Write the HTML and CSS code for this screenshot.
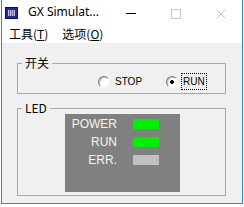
FILE: index.html
```html
<!DOCTYPE html>
<html>
<head>
<meta charset="utf-8">
<link rel="stylesheet" href="styles.css">
</head>
<body>
<div class="window">
  <div class="titlebar">
    <svg class="appicon" width="13" height="12" viewBox="0 0 13 12">
      <rect x="0" y="0" width="13" height="12" fill="#1a2aa8"/>
      <rect x="0.5" y="0.5" width="12" height="11" fill="none" stroke="#0a1060"/>
      <rect x="3" y="3" width="7" height="6" fill="#c8b8d8"/>
      <rect x="4" y="3" width="1" height="6" fill="#d04060"/>
      <rect x="6" y="3" width="1" height="6" fill="#d04060"/>
      <rect x="8" y="3" width="1" height="6" fill="#d04060"/>
    </svg>
    <span class="title">GX Simulat...</span>
    <div class="caption-btns">
      <svg class="cbtn" width="10" height="10" viewBox="0 0 10 10"><rect x="0" y="4" width="10" height="1" fill="#000"/></svg>
      <svg class="cbtn" width="10" height="10" viewBox="0 0 10 10"><rect x="0.5" y="0.5" width="9" height="9" fill="none" stroke="#c8c8c8"/></svg>
      <svg class="cbtn" width="10" height="10" viewBox="0 0 10 10"><path d="M0.5 0.5 L9.5 9.5 M9.5 0.5 L0.5 9.5" stroke="#c8c8c8" stroke-width="1"/></svg>
    </div>
  </div>
  <div class="menubar">
    <span class="menu">工具(<u>T</u>)</span>
    <span class="menu">选项(<u>O</u>)</span>
  </div>
  <div class="client">
    <fieldset class="group group-switch">
      <legend class="legend">开关</legend>
      <div class="radios">
        <label class="radio"><input type="radio" name="mode" class="rb"><span class="rtext">STOP</span></label>
        <label class="radio"><input type="radio" name="mode" class="rb" checked><span class="rtext focus">RUN</span></label>
      </div>
    </fieldset>
    <fieldset class="group group-led">
      <legend class="legend">LED</legend>
      <div class="panel">
        <span class="lname">POWER</span><span class="led on"></span>
        <span class="lname">RUN</span><span class="led on"></span>
        <span class="lname">ERR.</span><span class="led off"></span>
      </div>
    </fieldset>
  </div>
</div>
</body>
</html>
```
FILE: styles.css
```css
html, body {
  margin: 0;
  padding: 0;
  background: #ffffff;
}
.window {
  margin-left: 1px;
  width: 240px;
  border-left: 1px solid #2b87d8;
  border-right: 1px solid #2b87d8;
  border-bottom: 1px solid #2b87d8;
  background: #ffffff;
}
.titlebar {
  height: 24px;
  display: flex;
  align-items: center;
  position: relative;
}
.appicon {
  margin-left: 3px;
  margin-top: 1px;
  display: block;
}
.title {
  margin-left: 10px;
  font: 12px/14px "Noto Sans", "Liberation Sans", sans-serif;
  color: #000;
}
.caption-btns {
  display: flex;
  margin-left: 27px;
  gap: 35px;
  align-items: center;
  margin-top: 3px;
}
.cbtn {
  display: block;
}
.menubar {
  height: 19px;
  display: flex;
  align-items: center;
  gap: 14px;
  padding-left: 7px;
  font: 12px/16px "Noto Sans CJK SC", "Liberation Sans", sans-serif;
  color: #000;
}
.menu u {
  text-decoration: underline;
  text-underline-offset: 1px;
}
.client {
  height: 160px;
  background: #f0f0f0;
  box-sizing: border-box;
  padding: 14px 16px 0 15px;
  display: flex;
  flex-direction: column;
}
.group {
  margin: 0;
  padding: 0;
  border: 1px solid #a9a9a9;
  min-width: 0;
}
.legend {
  margin-left: 4px;
  padding: 0 3px;
  font: 12px/12px "Noto Sans CJK SC", "Liberation Sans", sans-serif;
  color: #000;
}
.group-switch {
  padding: 4px 0 3px 0;
}
.radios {
  display: flex;
  align-items: center;
  height: 17px;
  padding-left: 80px;
  gap: 23px;
}
.radio {
  display: flex;
  align-items: center;
  gap: 4px;
  font: 10px/13px "Liberation Sans", Arial, sans-serif;
  color: #000;
}
.rb {
  appearance: none;
  -webkit-appearance: none;
  margin: 0;
  width: 12px;
  height: 12px;
  border-radius: 50%;
  box-sizing: border-box;
  border: 1px solid;
  border-color: #7a7a7a #f4f4f4 #f4f4f4 #7a7a7a;
  background: #ffffff;
  box-shadow: inset 1px 1px 0 #c0c0c0;
}
.rb:checked {
  background: radial-gradient(circle, #000 0, #000 1.6px, #fff 2.2px);
}
.rtext {
  padding: 1px 1px;
}
.focus {
  outline: 1px dotted #000;
  outline-offset: 0;
}
.group-led {
  margin-top: 8px;
  padding: 0 0 3px 0;
}
.panel {
  margin-left: 47px;
  width: 115px;
  height: 78px;
  box-sizing: border-box;
  background: #808080;
  padding: 5px 0 0 6px;
  display: grid;
  grid-template-columns: 46px 26px;
  grid-auto-rows: 10px;
  column-gap: 16px;
  row-gap: 8px;
  align-content: start;
}
.lname {
  text-align: right;
  font: 12px/10px "Liberation Sans", Arial, sans-serif;
  color: #f4f4f4;
}
.led {
  display: block;
  height: 10px;
}
.led.on {
  background: #00f000;
}
.led.off {
  background: #c0c0c0;
}
```
